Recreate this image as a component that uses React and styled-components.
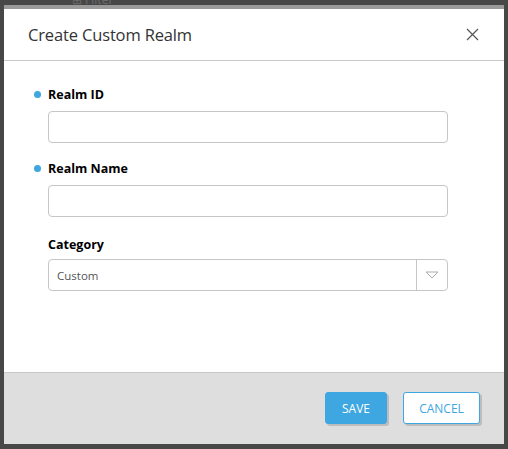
import React from "react";
import styled, { createGlobalStyle } from "styled-components";

const Global = createGlobalStyle`
  html, body { margin: 0; padding: 0; }
  body {
    width: 508px; height: 449px; overflow: hidden;
    background: #474747;
    font-family: "Open Sans", "Noto Sans", sans-serif;
  }
`;

const Page = styled.div`
  width: 508px;
  height: 449px;
  padding: 5px 4px 5px 4px;
  box-sizing: border-box;
  position: relative;
`;

const Backdrop = styled.div`
  position: absolute;
  left: 72px;
  top: -9px;
  color: #6a6a6a;
  font-size: 12px;
`;

const Dialog = styled.div`
  position: relative;
  width: 500px;
  height: 439px;
  display: flex;
  flex-direction: column;
  background: #fff;
  border-top: 4px solid #9a9a9a;
  box-sizing: border-box;
`;

const Header = styled.div`
  height: 51px;
  border-bottom: 1px solid #c8c8c8;
  display: flex;
  align-items: center;
  justify-content: space-between;
  padding: 0 25px 0 24px;
  flex: none;
`;

const Title = styled.h1`
  margin: 0;
  font-size: 16.5px;
  font-weight: 400;
  color: #333;
  letter-spacing: -0.15px;
`;

const Close = styled.button`
  border: none;
  background: none;
  padding: 0;
  width: 13px;
  height: 13px;
  display: flex;
  cursor: pointer;
`;

const Body = styled.div`
  flex: 1;
  padding: 24px 56px 0 30px;
  display: flex;
  flex-direction: column;
`;

const Field = styled.div`
  display: flex;
  flex-direction: column;
  margin-bottom: 16px;
`;

const Label = styled.label`
  display: flex;
  align-items: center;
  font-size: 12.5px;
  font-weight: 700;
  color: #000;
  height: 18px;
  margin-top: ${(p) => (p.$extra ? 2 : 0)}px;
  margin-bottom: ${(p) => (p.$extra ? 6 : 8)}px;
  padding-left: 14px;
  position: relative;
`;

const Dot = styled.span`
  position: absolute;
  left: 0;
  top: 6px;
  width: 7px;
  height: 7px;
  border-radius: 50%;
  background: #3ea6e0;
`;

const Input = styled.input`
  margin-left: 14px;
  height: 32px;
  box-sizing: border-box;
  border: 1px solid #c6c6c6;
  border-radius: 4px;
  padding: 0 8px;
  font-family: inherit;
  font-size: 12px;
  outline: none;
`;

const Select = styled.div`
  margin-left: 14px;
  height: 32px;
  box-sizing: border-box;
  border: 1px solid #c6c6c6;
  border-radius: 4px;
  display: flex;
  align-items: stretch;
`;

const SelectValue = styled.div`
  flex: 1;
  display: flex;
  align-items: center;
  padding-left: 8px;
  font-size: 11.5px;
  color: #555;
`;

const SelectArrow = styled.div`
  width: 30px;
  border-left: 1px solid #c6c6c6;
  display: flex;
  align-items: center;
  justify-content: center;
`;

const Footer = styled.div`
  height: 72px;
  flex: none;
  background: #dedede;
  border-top: 1px solid #c8c8c8;
  display: flex;
  align-items: center;
  justify-content: flex-end;
  gap: 16px;
  padding: 0 24px 1px 0;
  box-sizing: border-box;
`;

const Button = styled.button`
  height: 32px;
  box-sizing: border-box;
  border-radius: 3px;
  font-family: inherit;
  font-size: 12px;
  padding: 0;
  width: ${(p) => p.$w}px;
  border: 1px solid #3ea6e0;
  background: ${(p) => (p.$primary ? "#3ea6e0" : "#fff")};
  color: ${(p) => (p.$primary ? "#fff" : "#3ea6e0")};
  box-shadow: 2px 2px 0 #bdbdbd;
  cursor: pointer;
`;

export default function App() {
  return (
    <>
      <Global />
      <Page>
        <Backdrop>⊞ Filter</Backdrop>
        <Dialog>
          <Header>
            <Title>Create Custom Realm</Title>
            <Close aria-label="Close">
              <svg width="13" height="13" viewBox="0 0 13 13">
                <path d="M1 1L12 12M12 1L1 12" stroke="#555" strokeWidth="1.2" />
              </svg>
            </Close>
          </Header>
          <Body>
            <Field>
              <Label>
                <Dot />
                Realm ID
              </Label>
              <Input />
            </Field>
            <Field>
              <Label>
                <Dot />
                Realm Name
              </Label>
              <Input />
            </Field>
            <Field>
              <Label $extra>Category</Label>
              <Select>
                <SelectValue>Custom</SelectValue>
                <SelectArrow>
                  <svg width="14" height="8" viewBox="0 0 14 8">
                    <path d="M1 1H13L7 7Z" fill="none" stroke="#aaa" strokeWidth="1" />
                  </svg>
                </SelectArrow>
              </Select>
            </Field>
          </Body>
          <Footer>
            <Button $primary $w={62}>SAVE</Button>
            <Button $w={77}>CANCEL</Button>
          </Footer>
        </Dialog>
      </Page>
    </>
  );
}
